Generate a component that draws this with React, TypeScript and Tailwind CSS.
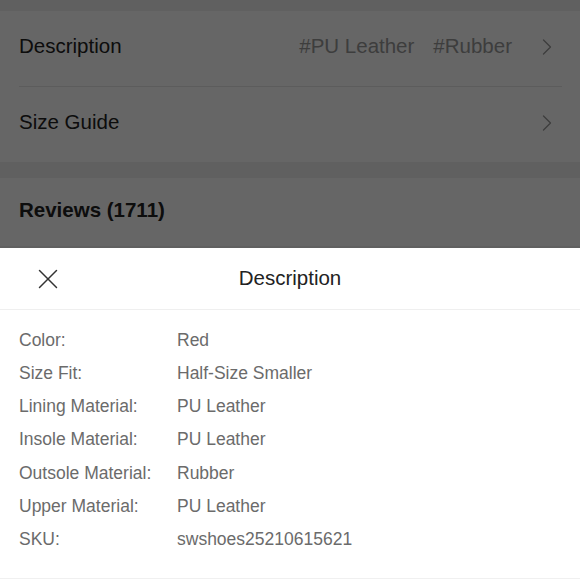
import { X, ChevronRight } from "lucide-react";

const specs: [string, string][] = [
  ["Color:", "Red"],
  ["Size Fit:", "Half-Size Smaller"],
  ["Lining Material:", "PU Leather"],
  ["Insole Material:", "PU Leather"],
  ["Outsole Material:", "Rubber"],
  ["Upper Material:", "PU Leather"],
  ["SKU:", "swshoes25210615621"],
];

function PageBehind() {
  return (
    <div className="relative h-[248px] overflow-hidden bg-[#f0f0f0]">
      <div className="pt-[11px]">
        <div className="bg-white">
          <div className="flex h-[75px] items-center pb-[4px] pl-[19px] pr-[19px]">
            <span className="flex-1 text-[20.5px] text-[#222]">Description</span>
            <span className="text-[20.5px] text-[#999]">#PU Leather</span>
            <span className="ml-[19px] text-[20.5px] text-[#999]">#Rubber</span>
            <ChevronRight size={28} strokeWidth={1.1} className="ml-[21px] text-[#999]" />
          </div>
          <div className="ml-[19px] mr-[18px] h-px bg-[#e5e5e5]" />
          <div className="flex h-[75px] items-center pb-[4px] pl-[19px] pr-[19px]">
            <span className="flex-1 text-[20.5px] text-[#222]">Size Guide</span>
            <ChevronRight size={28} strokeWidth={1.1} className="text-[#999]" />
          </div>
        </div>
        <div className="mt-[16px] bg-white">
          <div className="flex h-[68px] items-center pb-[4px] px-[19px]">
            <span className="text-[20.5px] font-bold text-[#222]">Reviews (1711)</span>
          </div>
        </div>
      </div>
      <div className="absolute inset-0 bg-black/60" />
    </div>
  );
}

function DescriptionSheet() {
  return (
    <div className="bg-white">
      <div className="relative flex h-[62px] items-center justify-center border-b border-[#efefef]">
        <button className="absolute left-[31px] top-[14px] text-[#333]">
          <X size={34} strokeWidth={1.05} />
        </button>
        <span className="text-[20.5px] text-[#222]">Description</span>
      </div>
      <div className="px-[19px] pt-[13px]">
        {specs.map(([label, value]) => (
          <div key={label} className="flex h-[33.3px] items-center text-[17.5px] text-[#6b6b6b]">
            <span className="w-[158px] shrink-0">{label}</span>
            <span>{value}</span>
          </div>
        ))}
      </div>
      <div className="mt-[22px] h-[2px] border-t border-[#f0f0f0]" />
    </div>
  );
}

export default function App() {
  return (
    <div className="h-[580px] w-[580px] overflow-hidden bg-white font-[family-name:'Liberation_Sans',Arial,sans-serif]">
      <PageBehind />
      <DescriptionSheet />
    </div>
  );
}
